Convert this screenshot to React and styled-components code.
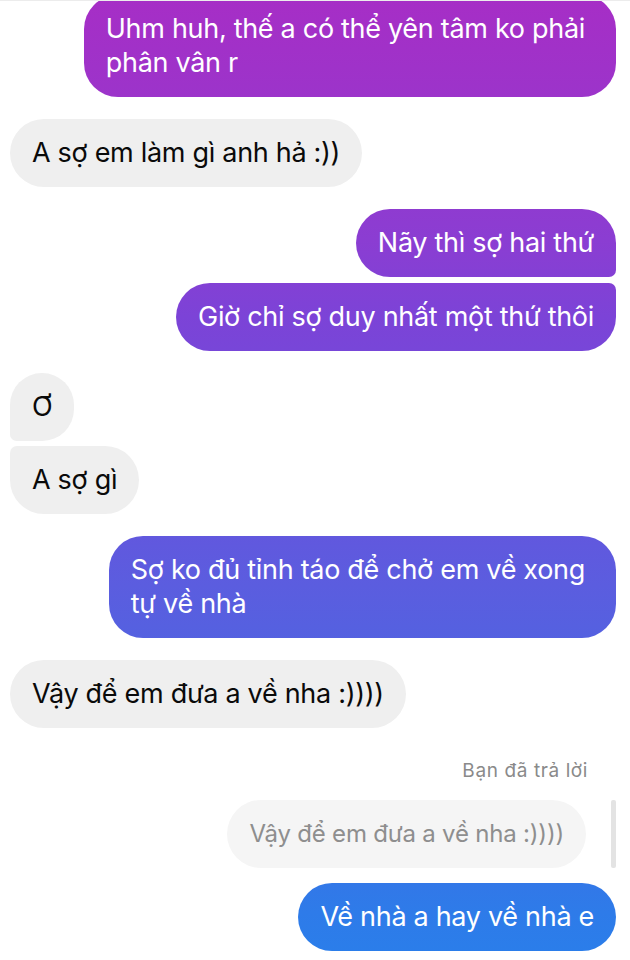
import React from 'react';
import styled, { createGlobalStyle, css } from 'styled-components';

const GlobalStyle = createGlobalStyle`
	html, body {
		margin: 0;
		padding: 0;
		background: #fff;
	}
	body {
		font-family: Inter, Roboto, "Liberation Sans", sans-serif;
	}
`;

const Thread = styled.div`
	width: 630px;
	height: 960px;
	overflow: hidden;
	box-sizing: border-box;
	padding: 0 14px 0 10px;
	display: flex;
	flex-direction: column;
	gap: 22px;
	border-top: 1px solid #ececec;
`;

const Group = styled.div`
	display: flex;
	flex-direction: column;
	align-items: ${props => (props.mine ? 'flex-end' : 'flex-start')};
	gap: ${props => props.gap || 6}px;
	margin-top: ${props => props.offset || 0}px;
`;

const BIG = 34;
const SMALL = 7;

const Bubble = styled.div`
	box-sizing: border-box;
	padding: 17px ${props => (props.wrapped ? 31 : 22)}px 17px 22px;
	font-size: 27px;
	line-height: 34px;
	letter-spacing: -0.3px;
	white-space: nowrap;
	border-radius: ${props =>
		[props.tl, props.tr, props.br, props.bl]
			.map(r => `${r === 's' ? SMALL : BIG}px`)
			.join(' ')};
	${props =>
		props.mine
			? css`
					color: #fff;
					background: linear-gradient(
						180deg,
						#a62ec6 0%,
						#9a35cb 12%,
						#8b3dd2 25%,
						#7c43d7 33%,
						#6a50dc 48%,
						#5b5ddf 61%,
						#4669e3 78%,
						#2e7be9 95%,
						#2a7eea 100%
					);
					background-attachment: fixed;
			  `
			: css`
					color: #0a0a0a;
					background: #efefef;
			  `}
`;

const ReplyLabel = styled.div`
	font-size: 19px;
	line-height: 24px;
	color: #8a8a8a;
	letter-spacing: 0.6px;
	padding-right: 28px;
	margin-bottom: 11px;
`;

const QuoteRow = styled.div`
	display: flex;
	align-items: stretch;
	gap: 25px;
	margin-bottom: 9px;
`;

const Quote = styled.div`
	padding: 17px 22px;
	font-size: 24px;
	line-height: 34px;
	letter-spacing: -0.2px;
	white-space: nowrap;
	color: #8e8e8e;
	background: #f5f5f5;
	border-radius: 34px;
`;

const QuoteBar = styled.div`
	width: 5px;
	background: #e3e3e3;
	border-radius: 2px;
`;

const App = () => (
	<>
		<GlobalStyle />
		<Thread>
			<Group mine offset={-6}>
				<Bubble mine wrapped>
					Uhm huh, thế a có thể yên tâm ko phải
					<br />
					phân vân r
				</Bubble>
			</Group>
			<Group>
				<Bubble>A sợ em làm gì anh hả :))</Bubble>
			</Group>
			<Group mine>
				<Bubble mine br="s">Nãy thì sợ hai thứ</Bubble>
				<Bubble mine tr="s">Giờ chỉ sợ duy nhất một thứ thôi</Bubble>
			</Group>
			<Group gap={5}>
				<Bubble bl="s">Ơ</Bubble>
				<Bubble tl="s">A sợ gì</Bubble>
			</Group>
			<Group mine>
				<Bubble mine wrapped>
					Sợ ko đủ tỉnh táo để chở em về xong
					<br />
					tự về nhà
				</Bubble>
			</Group>
			<Group>
				<Bubble>Vậy để em đưa a về nha :))))</Bubble>
			</Group>
			<Group mine gap={0} offset={9}>
				<ReplyLabel>Bạn đã trả lời</ReplyLabel>
				<QuoteRow>
					<Quote>Vậy để em đưa a về nha :))))</Quote>
					<QuoteBar />
				</QuoteRow>
				<Bubble mine>Về nhà a hay về nhà e</Bubble>
			</Group>
		</Thread>
	</>
);

export default App;
